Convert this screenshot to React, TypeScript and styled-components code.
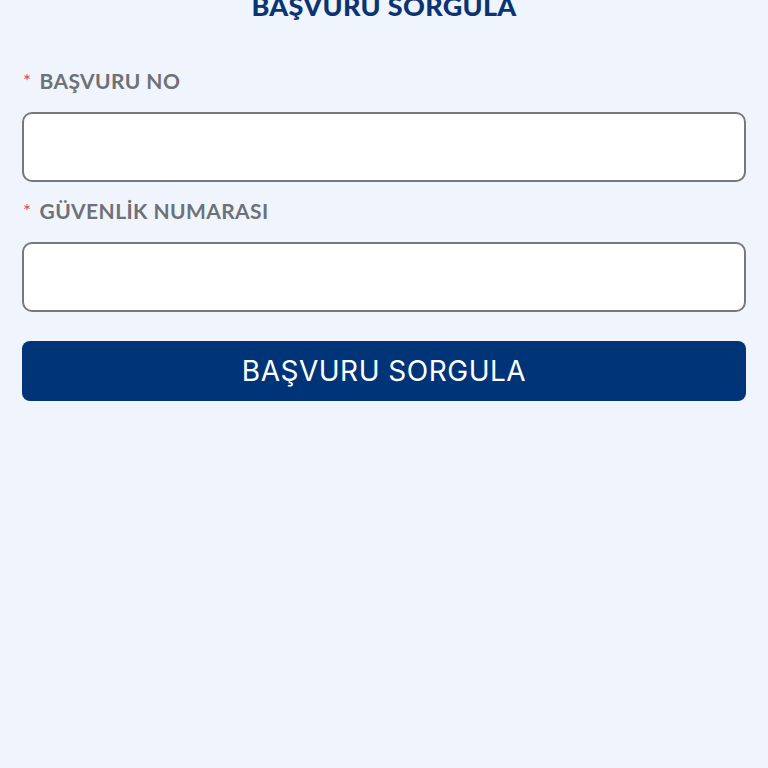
import styled, { createGlobalStyle } from 'styled-components';

const GlobalStyle = createGlobalStyle`
  html, body {
    margin: 0;
    padding: 0;
    background-color: #F0F5FD;
  }
  * {
    box-sizing: border-box;
  }
`;

const Page = styled.div`
  width: 100vw;
  min-height: 100vh;
  background-color: #F0F5FD;
  padding: 0 22px;
  display: flex;
  flex-direction: column;
  overflow: hidden;
`;

const Title = styled.h1`
  margin: -10px 0 0 0;
  font-family: Lato, "Noto Sans", sans-serif;
  font-size: 27px;
  font-weight: 900;
  line-height: 32px;
  color: #0A3472;
  text-align: center;
  letter-spacing: 0.3px;
`;

const Field = styled.div<{ $top: number }>`
  display: flex;
  flex-direction: column;
  margin-top: ${(p) => p.$top}px;
`;

const Label = styled.label`
  display: flex;
  align-items: center;
  gap: 8px;
  font-family: Lato, "Noto Sans", sans-serif;
  font-size: 21px;
  font-weight: 700;
  line-height: 26px;
  color: #6E7178;
  letter-spacing: 0.4px;
  padding-left: 1px;
`;

const Star = styled.span`
  color: #E0455F;
  font-size: 19px;
  font-weight: 400;
`;

const Input = styled.input`
  margin-top: 18px;
  width: 100%;
  height: 70px;
  border: 2px solid #77787B;
  border-radius: 10px;
  background-color: #FFFFFF;
  font-size: 20px;
  padding: 0 14px;
  outline: none;
`;

const SubmitButton = styled.button`
  margin-top: 29px;
  width: 100%;
  height: 60px;
  border: none;
  border-radius: 8px;
  background-color: #003478;
  color: #FFFFFF;
  font-family: Inter, Roboto, "Noto Sans", sans-serif;
  font-size: 28px;
  font-weight: 400;
  letter-spacing: 0.5px;
  display: flex;
  justify-content: center;
  align-items: center;
  cursor: pointer;
`;

function App() {
  return (
    <Page>
      <GlobalStyle />
      <Title>BAŞVURU SORGULA</Title>
      <Field $top={46}>
        <Label>
          <Star>*</Star>
          BAŞVURU NO
        </Label>
        <Input type="text" />
      </Field>
      <Field $top={16}>
        <Label>
          <Star>*</Star>
          GÜVENLİK NUMARASI
        </Label>
        <Input type="text" />
      </Field>
      <SubmitButton>BAŞVURU SORGULA</SubmitButton>
    </Page>
  );
}

export default App;
